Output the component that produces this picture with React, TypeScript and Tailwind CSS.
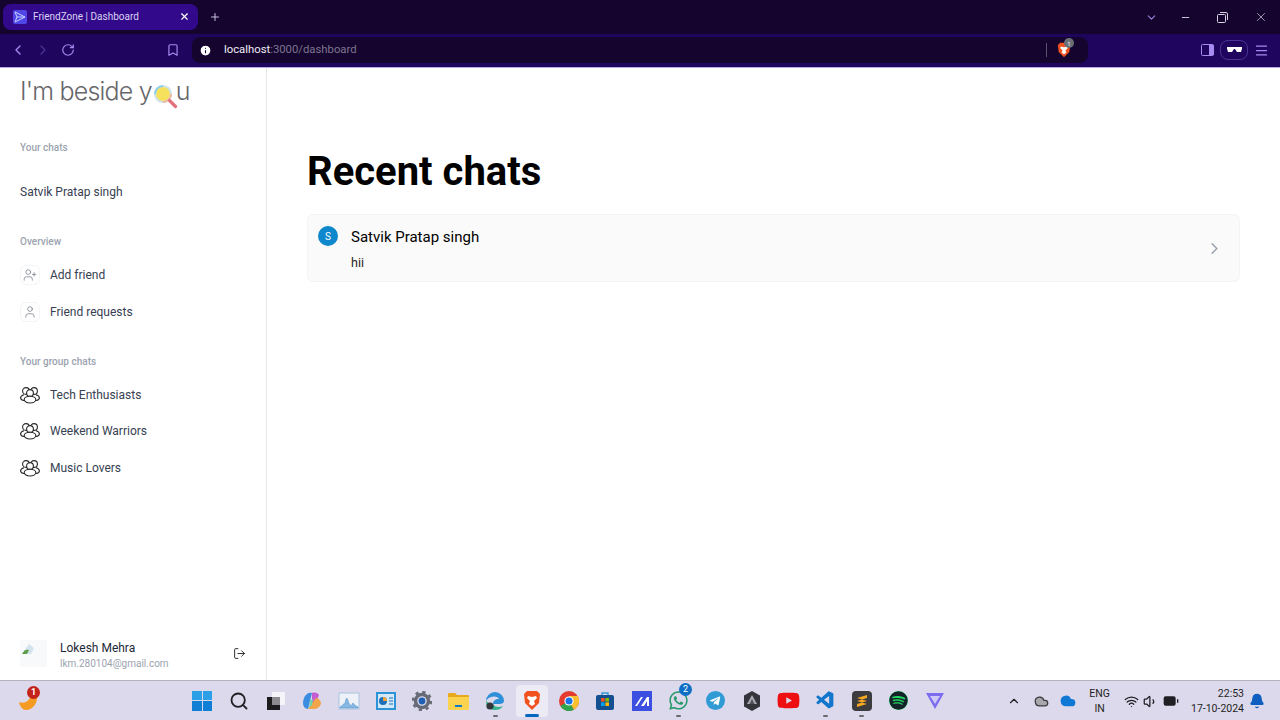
import React from "react";
import {
  ChevronLeft,
  ChevronRight,
  ChevronDown,
  ChevronUp,
  RotateCw,
  Bookmark,
  Info,
  X,
  Plus,
  Minus,
  Menu,
  UserPlus,
  User,
  LogOut,
  Search,
  Bell,
  Wifi,
  Volume1,
  BatteryFull,
  Cloud,
} from "lucide-react";
import { FaSpotify, FaWhatsapp, FaTelegramPlane, FaYoutube } from "react-icons/fa";
import { VscVscode } from "react-icons/vsc";

function GroupIcon() {
  return (
    <svg width="20" height="18" viewBox="0 0 20 18" fill="none" stroke="#27272a" strokeWidth="1.1">
      <circle cx="6" cy="5" r="3.4" />
      <circle cx="14" cy="5" r="3.4" />
      <circle cx="10" cy="7" r="3.4" fill="white" />
      <path d="M4 8.8C1.8 9.4.6 10.6.6 12c0 1.3 1.4 2.2 3.4 2.5M16 8.8c2.2.6 3.4 1.8 3.4 3.2 0 1.3-1.4 2.2-3.4 2.5" />
      <ellipse cx="10" cy="13.6" rx="5.8" ry="3.4" fill="white" />
    </svg>
  );
}

function SideRow({ icon, label }: { icon: React.ReactNode; label: string }) {
  return (
    <div className="flex h-[26px] items-center gap-[10px]">
      <div className="flex h-5 w-5 items-center justify-center rounded-md border border-gray-100 bg-white">{icon}</div>
      <span className="text-[12px] text-[#374151]">{label}</span>
    </div>
  );
}

function GroupRow({ label }: { label: string }) {
  return (
    <div className="flex h-[26px] items-center gap-[10px]">
      <div className="flex h-5 w-5 items-center justify-center">
        <GroupIcon />
      </div>
      <span className="text-[12px] text-[#374151]">{label}</span>
    </div>
  );
}

function Slot({ children, active, dot }: { children: React.ReactNode; active?: boolean; dot?: boolean }) {
  return (
    <div className="relative flex h-[38px] w-[36.65px] shrink-0 items-center justify-center">
      {active && <div className="absolute inset-x-[2px] inset-y-[3px] rounded bg-[#eceaf5]" />}
      <div className="relative flex items-center justify-center">{children}</div>
      {dot && <div className="absolute bottom-[3px] h-[2px] w-[5px] rounded bg-[#6b6b73]" />}
      {active && <div className="absolute bottom-[3px] h-[3px] w-[14px] rounded bg-[#0067c0]" />}
    </div>
  );
}

function Taskbar() {
  return (
    <div className="relative flex h-10 shrink-0 items-center border-t border-[#b5b3bd] bg-[#dcd9ec]">
      <div className="absolute left-[17px] top-[7px]">
        <svg width="22" height="24" viewBox="0 0 22 24">
          <path d="M2 14c5 2 10 0 12-7h6c1 8-4 15-11 15-4 0-6-4-7-8z" fill="#f59a23" />
        </svg>
        <div className="absolute left-[10px] top-[-2px] flex h-[13px] w-[13px] items-center justify-center rounded-full bg-[#c4231c] text-[9px] font-bold text-white">1</div>
      </div>

      <div className="ml-[184px] flex items-center">
        <Slot>
          <div className="grid h-5 w-5 grid-cols-2 gap-[1px]">
            <div className="bg-[#2ba0e6]" />
            <div className="bg-[#2ba0e6]" />
            <div className="bg-[#0f7fd6]" />
            <div className="bg-[#0f7fd6]" />
          </div>
        </Slot>
        <Slot>
          <Search size={20} color="#1f1f24" strokeWidth={2.2} />
        </Slot>
        <Slot>
          <svg width="20" height="20" viewBox="0 0 20 20">
            <rect x="6" y="1" width="13" height="13" fill="#f5f4f8" />
            <rect x="1" y="6" width="13" height="13" fill="#1c1c1f" />
            <rect x="6" y="6" width="8" height="8" fill="#8b8b8f" />
          </svg>
        </Slot>
        <Slot>
          <svg width="20" height="20" viewBox="0 0 20 20">
            <path d="M3 5c2-3 5-4 7-3L8 10 6 18c-3 0-5-3-5-6s1-5 2-7z" fill="#3b8ce0" />
            <path d="M10 2c3-1 6 0 7 2l-3 8-4 1 0-11z" fill="#c65bd0" />
            <path d="M14 7c3 0 5 3 5 6-1 3-4 5-7 5H6l4-6 4-5z" fill="#f2a44a" />
            <path d="M8 9l3-1-1 6-3 3z" fill="#6ed1b0" />
          </svg>
        </Slot>
        <Slot>
          <svg width="22" height="18" viewBox="0 0 22 18">
            <rect x="1" y="1" width="20" height="16" fill="#eef2f8" stroke="#a9c4de" />
            <path d="M2 15c3-1 3-4 5-3 1-6 2-8 3-3 2 5 3 6 5 2 1 2 3 3 5 4v1H2z" fill="#88b8e2" stroke="#4f93d0" strokeWidth=".6" />
          </svg>
        </Slot>
        <Slot>
          <svg width="20" height="18" viewBox="0 0 20 18">
            <rect x="0" y="0" width="20" height="18" fill="#2b93d6" />
            <rect x="2" y="2" width="16" height="14" fill="#d4e9f7" />
            <circle cx="7" cy="9" r="4" fill="#1d6fb8" />
            <path d="M7 9V5a4 4 0 014 4z" fill="#f2a33a" />
            <path d="M13 6h4M13 9h4M13 12h4" stroke="#1d6fb8" />
          </svg>
        </Slot>
        <Slot>
          <svg width="20" height="20" viewBox="0 0 20 20">
            <circle cx="10" cy="10" r="6.5" fill="none" stroke="#656a75" strokeWidth="3.4" />
            <circle cx="10" cy="10" r="9" fill="none" stroke="#656a75" strokeWidth="2.4" strokeDasharray="3.2 3.87" />
            <circle cx="10" cy="10" r="3.4" fill="#1f5fb4" />
          </svg>
        </Slot>
        <Slot>
          <svg width="21" height="18" viewBox="0 0 21 18">
            <path d="M0 2a1 1 0 011-1h6l2 2h11a1 1 0 011 1v2H0z" fill="#e8a91c" />
            <path d="M0 5h21v12a1 1 0 01-1 1H1a1 1 0 01-1-1z" fill="#fbd34e" />
            <rect x="7" y="13" width="7" height="2" fill="#1478c8" />
          </svg>
        </Slot>
        <Slot dot>
          <svg width="20" height="20" viewBox="0 0 20 20">
            <path d="M1 10a9 9 0 0118 0c0 2-2 3-5 3H8c0-3 2-5 6-5-1-3-9-4-13 2z" fill="#2c8fd8" />
            <path d="M1 10c0 6 4 9 9 9 3 0 6-1 8-4-4 2-9 1-10-2-2 0-5-1-7-3z" fill="#35b58c" />
            <circle cx="5" cy="15" r="3.6" fill="#33363b" />
          </svg>
        </Slot>
        <Slot active>
          <svg width="18" height="21" viewBox="0 0 18 21">
            <path d="M4 1h10l3 3-1 9-7 7-7-7-1-9z" fill="#f1501f" />
            <path d="M5 6l4 1 4-1 1 2-3 3 1 3-3 2-3-2 1-3-3-3z" fill="#fff" />
          </svg>
        </Slot>
        <Slot>
          <svg width="20" height="20" viewBox="0 0 20 20">
            <circle cx="10" cy="10" r="10" fill="#e33b2e" />
            <path d="M10 10L1.3 15a10 10 0 0013.7 3.7z" fill="#2fa44f" />
            <path d="M10 5h8.7a10 10 0 01-3.7 13.7L10 10z" fill="#fbc02d" />
            <circle cx="10" cy="10" r="4.6" fill="#fff" />
            <circle cx="10" cy="10" r="3.5" fill="#1a73e8" />
          </svg>
        </Slot>
        <Slot>
          <svg width="20" height="20" viewBox="0 0 20 20">
            <path d="M7 4V2h6v2" fill="none" stroke="#2f9bd8" strokeWidth="1.4" />
            <rect x="1" y="4" width="18" height="15" rx="2" fill="#14508f" />
            <rect x="6" y="7" width="3.6" height="3.6" fill="#f25022" />
            <rect x="10.4" y="7" width="3.6" height="3.6" fill="#7fba00" />
            <rect x="6" y="11.4" width="3.6" height="3.6" fill="#00a4ef" />
            <rect x="10.4" y="11.4" width="3.6" height="3.6" fill="#ffb900" />
          </svg>
        </Slot>
        <Slot>
          <svg width="20" height="20" viewBox="0 0 20 20">
            <rect width="20" height="20" fill="#3b4fe0" />
            <path d="M3 15L9 6h2l-6 9zM9 15l6-9h2v9h-2v-5l-3 5z" fill="#fff" />
          </svg>
        </Slot>
        <Slot dot>
          <FaWhatsapp size={21} color="#26996a" />
          <div className="absolute left-[11px] top-[-7px] flex h-[13px] w-[13px] items-center justify-center rounded-full bg-[#0f6fc6] text-[9px] text-white">2</div>
        </Slot>
        <Slot>
          <div className="flex h-[19px] w-[19px] items-center justify-center rounded-full bg-[#2f9ad4]">
            <FaTelegramPlane size={12} color="#fff" />
          </div>
        </Slot>
        <Slot>
          <svg width="18" height="20" viewBox="0 0 18 20">
            <path d="M9 0l8 4.5v11L9 20l-8-4.5v-11z" fill="#33353a" />
            <path d="M9 4l5 9H4z" fill="#a9abb0" />
            <path d="M9 8l2.5 5h-5z" fill="#50525a" />
          </svg>
        </Slot>
        <Slot>
          <FaYoutube size={23} color="#ee0f13" />
        </Slot>
        <Slot dot>
          <VscVscode size={21} color="#1277cc" />
        </Slot>
        <Slot dot>
          <div className="flex h-5 w-5 items-center justify-center rounded-sm bg-[#3c3c3e]">
            <svg width="12" height="14" viewBox="0 0 12 14">
              <path d="M11 1v3L1 7V4zM1 7l10 3v-3L1 4zM11 7v3l-10 3v-3z" fill="#f5a623" />
            </svg>
          </div>
        </Slot>
        <Slot>
          <FaSpotify size={19} color="#16222a" className="rounded-full bg-[#1ed760]" />
        </Slot>
        <Slot>
          <svg width="20" height="18" viewBox="0 0 20 18">
            <path d="M1 1h18L10 17z" fill="#7c6cf0" />
            <path d="M5 4h10l-5 8z" fill="#cfc9f8" />
          </svg>
        </Slot>
      </div>

      <div className="absolute right-[15px] top-0 flex h-10 items-center text-[#1f1f24]">
        <ChevronUp size={14} strokeWidth={2} />
        <Cloud size={15} fill="#a8a8ac" color="#3a3a40" className="ml-[13px]" />
        <Cloud size={16} fill="#0f78d4" color="#0f78d4" className="ml-[11px]" />
        <div className="ml-[13px] text-center text-[10.5px] leading-[15px]">
          ENG
          <br />
          IN
        </div>
        <Wifi size={15} className="ml-[14px]" />
        <Volume1 size={15} className="ml-[4px]" />
        <BatteryFull size={16} fill="#1f1f24" className="ml-[5px]" />
        <div className="ml-[12px] text-right text-[10.5px] leading-[15px]">
          22:53
          <br />
          17-10-2024
        </div>
        <Bell size={16} fill="#0f5fc0" color="#0f5fc0" className="ml-[5px]" />
      </div>
    </div>
  );
}

export default function App() {
  return (
    <div className="flex h-[720px] w-[1280px] flex-col overflow-hidden bg-white font-['Roboto',sans-serif]">
      {/* tab strip */}
      <div className="flex h-[34px] shrink-0 items-start bg-[#15052e] pl-[3px] pt-1">
        <div className="flex h-[26px] w-[195px] items-center rounded-lg bg-[#33098c] pb-[1px] pl-[10px] pr-[8px]">
          <svg width="14" height="14" viewBox="0 0 14 14" fill="none">
            <rect width="14" height="14" rx="2" fill="#4f46e5" />
            <path d="M2 2l10 5-10 5 2-5zM4 7h8" stroke="#c7d2fe" strokeWidth="1" />
          </svg>
          <span className="ml-[6px] flex-1 text-[10px] text-[#d9d2f2]">FriendZone | Dashboard</span>
          <X size={11} color="#fff" strokeWidth={2.5} />
        </div>
        <Plus size={12} color="#c9c2e0" strokeWidth={2} className="ml-[11px] mt-[7px]" />
        <div className="ml-auto mt-[6px] flex items-center pr-[12px] text-[#d8d4e6]">
          <ChevronDown size={13} color="#9a80e0" />
          <Minus size={11} className="ml-[22px]" />
          <svg width="11" height="11" viewBox="0 0 11 11" fill="none" stroke="currentColor" className="ml-[26px]">
            <rect x=".5" y="2.5" width="8" height="8" rx="1" />
            <path d="M3 .5h6a1.5 1.5 0 011.5 1.5v6" />
          </svg>
          <X size={14} strokeWidth={1.2} className="ml-[26px]" />
        </div>
      </div>

      {/* toolbar */}
      <div className="flex h-[34px] shrink-0 items-center border-b border-[#b9a8e6] bg-[#20055f] pb-[1px] pl-[10px]">
        <ChevronLeft size={16} color="#a88bf0" />
        <ChevronRight size={16} color="#4b3393" className="ml-[9px]" />
        <RotateCw size={14} color="#a88bf0" className="ml-[10px]" />
        <Bookmark size={14} color="#a88bf0" className="ml-[91px]" />
        <div className="ml-[12px] flex h-[26px] w-[896px] items-center rounded-lg bg-[#15052e] pl-[7px] pr-[17px]">
          <Info size={13} color="#15052e" fill="#fff" />
          <span className="ml-[12px] flex-1 text-[11.3px] text-[#efedf5]">
            localhost<span className="text-[#7e7690]">:3000/dashboard</span>
          </span>
          <div className="h-[14px] w-px bg-[#5b5070]" />
          <div className="relative ml-[10px]">
            <svg width="14" height="16" viewBox="0 0 18 21">
              <path d="M4 1h10l3 3-1 9-7 7-7-7-1-9z" fill="#f1501f" />
              <path d="M5 6l4 1 4-1 1 2-3 3 1 3-3 2-3-2 1-3-3-3z" fill="#fff" />
            </svg>
            <div className="absolute left-[7px] top-[-4px] flex h-[10px] w-[10px] items-center justify-center rounded-full bg-[#6b7078] text-[6px] text-white">1</div>
          </div>
        </div>
        <div className="ml-auto flex items-center pr-[11px]">
          <svg width="13" height="12" viewBox="0 0 13 12">
            <rect x=".5" y=".5" width="12" height="11" rx="1" fill="none" stroke="#a88bf0" />
            <rect x="8" y="1" width="4.5" height="10" fill="#a88bf0" />
          </svg>
          <div className="ml-[6px] flex h-5 w-[28px] items-center justify-center rounded-lg border border-[#4b3393]">
            <svg width="15" height="6" viewBox="0 0 15 6">
              <path d="M0 0h15v1.5l-1 3.5h-4L8 2H7L5 5H1L0 1.5z" fill="#fff" />
            </svg>
          </div>
          <Menu size={15} color="#a88bf0" className="ml-[6px]" />
        </div>
      </div>

      {/* page */}
      <div className="flex min-h-0 flex-1">
        <aside className="flex w-[267px] shrink-0 flex-col border-r border-gray-200 pl-5 pr-5">
          <div className="flex h-[51px] items-start pt-[3px] font-['Inter',sans-serif] text-[25px] font-light leading-[40px] tracking-[-0.8px] text-[#66666a]">
            I'm beside y
            <svg width="26" height="28" viewBox="0 0 26 28" fill="none" className="ml-[1px] mt-[13px]">
              <circle cx="10" cy="10" r="8" fill="#f6e15c" stroke="#cfe3ea" strokeWidth="2.2" />
              <path d="M2 10A8 8 0 0110 2" stroke="#8dd0ea" strokeWidth="2" />
              <path d="M10 18A8 8 0 0018 10" stroke="#f2b8a0" strokeWidth="2" />
              <path d="M16.5 16.5l6 6" stroke="#e4707e" strokeWidth="3.2" strokeLinecap="round" />
            </svg>
            <span className="ml-[-3px]">u</span>
          </div>
          <div className="mt-[20.5px] text-[10px] font-medium leading-4 text-[#9ca3af]">Your chats</div>
          <div className="mt-[26px] text-[12px] leading-5 text-[#374151]">Satvik Pratap singh</div>
          <div className="mt-[32px] text-[10px] font-medium leading-4 text-[#9ca3af]">Overview</div>
          <div className="mt-[12px] flex flex-col gap-[11px]">
            <SideRow icon={<UserPlus size={14} color="#6b7280" strokeWidth={1.2} />} label="Add friend" />
            <SideRow icon={<User size={14} color="#6b7280" strokeWidth={1.2} />} label="Friend requests" />
          </div>
          <div className="mt-[29px] text-[10px] font-medium leading-4 text-[#9ca3af]">Your group chats</div>
          <div className="mt-[12px] flex flex-col gap-[10.75px]">
            <GroupRow label="Tech Enthusiasts" />
            <GroupRow label="Weekend Warriors" />
            <GroupRow label="Music Lovers" />
          </div>
          <div className="mb-[6px] mt-auto flex h-[39px] items-center pb-[2px]">
            <div className="h-[27px] w-[27px] bg-[#f8f9fb] pl-[1px] pt-[1px]">
              <svg width="14" height="14" viewBox="0 0 14 14">
                <path d="M1 13L8 3l5 4-3 6z" fill="#d4e4ee" />
                <path d="M1 13c2-4 4-5 7-4l-2 4z" fill="#5f9e48" />
              </svg>
            </div>
            <div className="ml-[13px] flex-1 pt-[5px]">
              <div className="text-[12px] leading-4 text-[#1f2937]">Lokesh Mehra</div>
              <div className="text-[10px] leading-4 text-[#9ca3af]">lkm.280104@gmail.com</div>
            </div>
            <LogOut size={13} color="#111" strokeWidth={1.6} />
          </div>
        </aside>

        <main className="flex-1 px-10 pt-[75px]">
          <h1 className="text-[40px] font-bold leading-[58px] text-black">Recent chats</h1>
          <div className="mt-[13px] flex h-[68px] items-start rounded-md border border-gray-100 bg-[#fafafa] pl-[10px] pr-[15px] pt-[11px]">
            <div className="flex h-5 w-5 shrink-0 items-center justify-center rounded-full bg-[#0e87cc] text-[10px] text-white">S</div>
            <div className="ml-[13px] flex-1 pt-[1px]">
              <div className="text-[15px] leading-5 text-black">Satvik Pratap singh</div>
              <div className="mt-[6px] text-[12.5px] leading-5 text-[#27272a]">hii</div>
            </div>
            <ChevronRight size={19} color="#9ca3af" className="mt-[13px]" />
          </div>
        </main>
      </div>

      <Taskbar />
    </div>
  );
}
